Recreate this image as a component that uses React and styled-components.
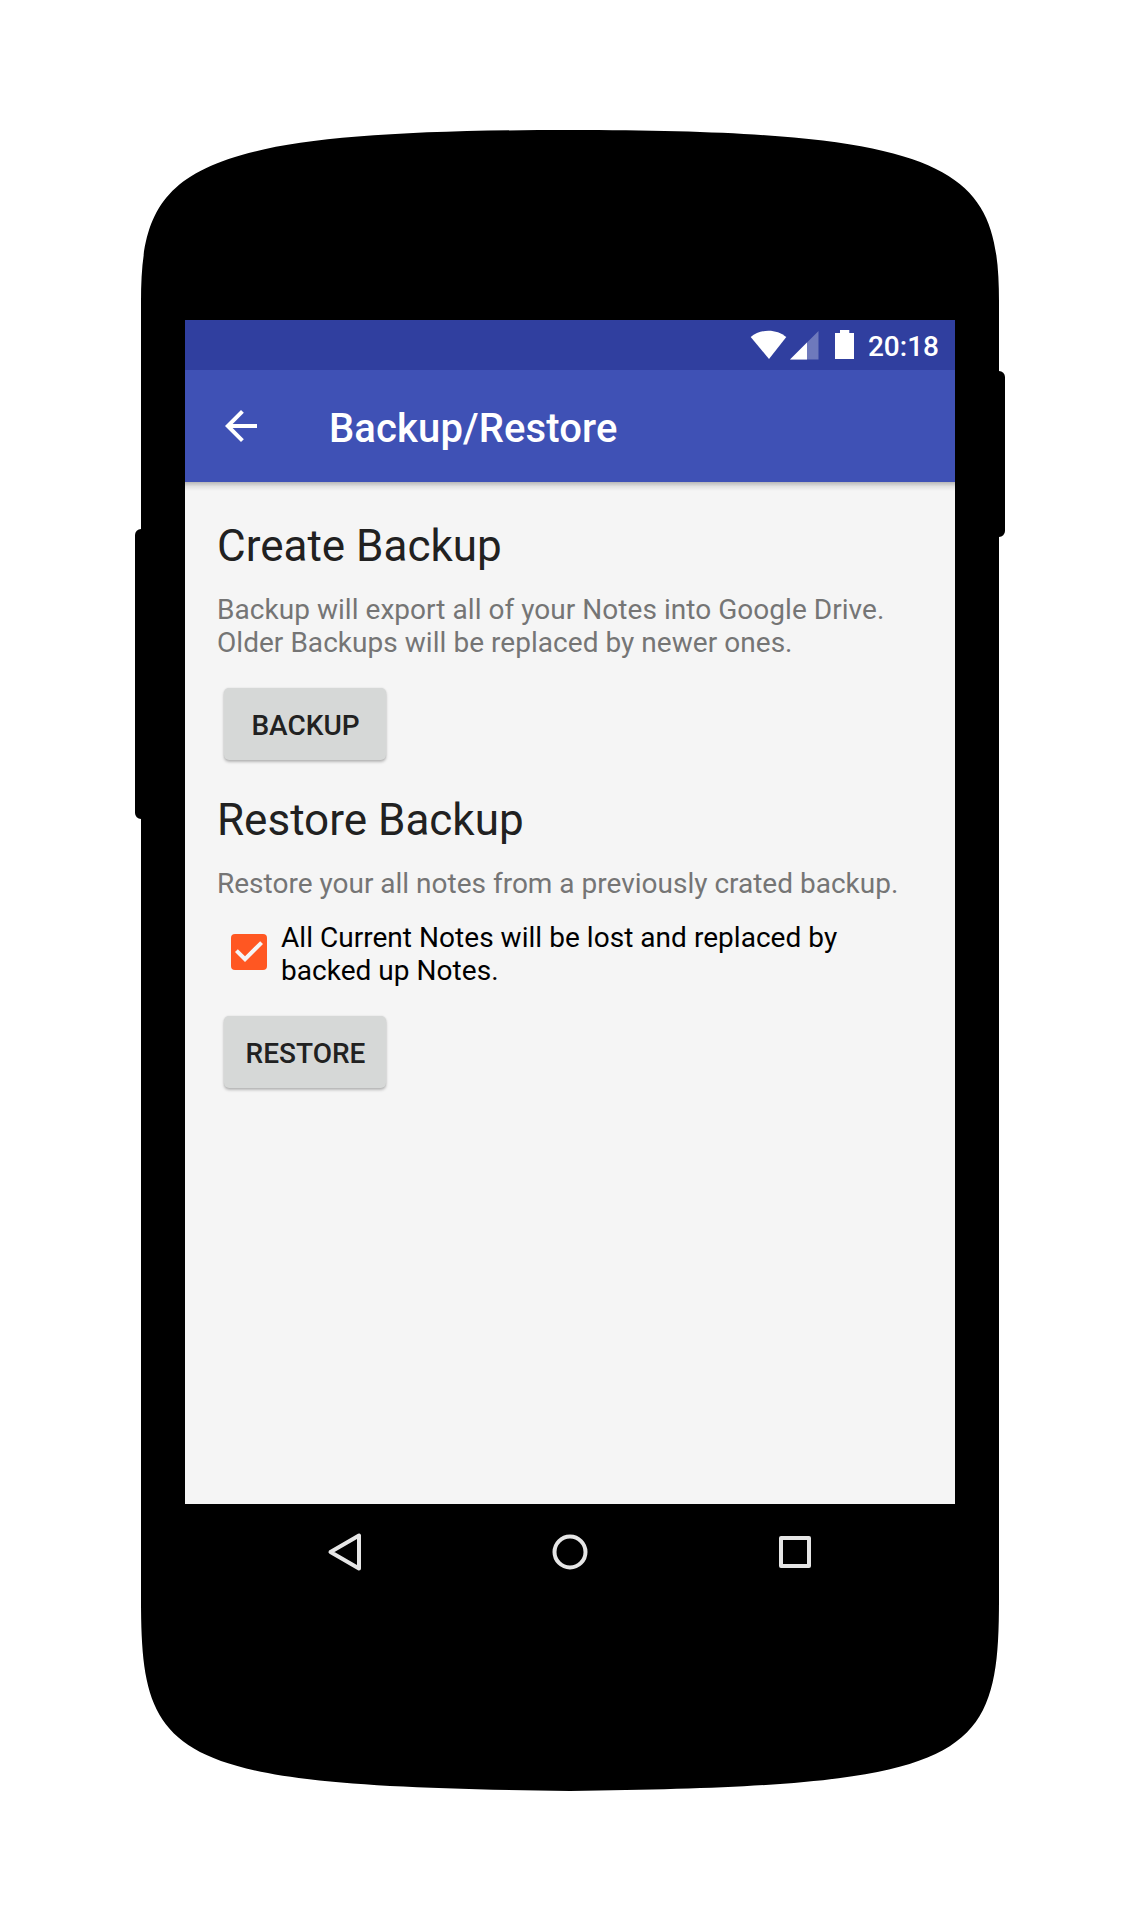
import React, { useState } from "react";
import styled, { createGlobalStyle } from "styled-components";

const GlobalStyle = createGlobalStyle`
  * { box-sizing: border-box; }
  body {
    margin: 0;
    background: #ffffff;
    font-family: Roboto, "Liberation Sans", sans-serif;
  }
`;

const Page = styled.main`
  display: flex;
  justify-content: center;
  width: 1140px;
  height: 1920px;
  padding-top: 130px;
`;

/* Phone silhouette: curved shell plus the side keys. */
const Device = styled.div`
  width: 870px;
  height: 1661px;
  padding: 190px 50px 0;
  background: #000000;
  clip-path: path(
    "M435 0 C825 0 864 40 864 172 L864 241 A6 6 0 0 1 870 247 L870 401 A6 6 0 0 1 864 407 L864 1470 C864 1632 836 1656 435 1661 C34 1656 6 1632 6 1470 L6 689 A6 6 0 0 1 0 683 L0 405 A6 6 0 0 1 6 399 L6 172 C6 40 45 0 435 0 Z"
  );
`;

const Screen = styled.div`
  display: flex;
  flex-direction: column;
  width: 770px;
  height: 1280px;
`;

const StatusBar = styled.div`
  display: flex;
  align-items: flex-start;
  justify-content: flex-end;
  height: 50px;
  padding: 10px 16px 0 0;
  background: #303f9f;
  color: #ffffff;
`;

const StatusIcons = styled.svg`
  flex: none;
  width: 106px;
  height: 32px;
  margin-right: 12px;
`;

const Clock = styled.time`
  font-size: 28px;
  font-weight: 500;
  line-height: 33px;
`;

const Toolbar = styled.header`
  display: flex;
  align-items: center;
  flex: none;
  height: 112px;
  padding-left: 32px;
  background: #3f51b5;
  color: #ffffff;
`;

const BackButton = styled.button`
  display: flex;
  width: 48px;
  height: 48px;
  margin-right: 64px;
  padding: 0;
  border: 0;
  background: none;
  color: inherit;

  svg {
    width: 48px;
    height: 48px;
  }
`;

const Title = styled.h1`
  margin: 6px 0 0;
  font-size: 40px;
  font-weight: 500;
  line-height: 48px;
  letter-spacing: 0.12px;
`;

const Content = styled.section`
  flex: 1;
  padding: 38px 32px 0;
  background: linear-gradient(rgba(0, 0, 0, 0.25), rgba(0, 0, 0, 0.08) 50%, rgba(0, 0, 0, 0)) 0 0 / 100% 9px no-repeat #f5f5f5;
`;

const Heading = styled.h2`
  margin: 0 0 21px;
  color: #212121;
  font-size: 44px;
  font-weight: 400;
  line-height: 52px;
`;

const Description = styled.p`
  margin: 0;
  color: #757575;
  font-size: 28px;
  line-height: 33px;
  letter-spacing: ${(p) => p.$tracking || "normal"};
  white-space: pre-line;
`;

const ActionButton = styled.button`
  display: flex;
  align-items: center;
  justify-content: center;
  width: 162px;
  height: 72px;
  margin: 29px 0 ${(p) => p.$gapAfter || 0}px 7px;
  padding: 3px 0 0 1px;
  border: 0;
  border-radius: 5px;
  background: #d6d8d7;
  box-shadow: 0 2px 3px rgba(0, 0, 0, 0.25), 0 0 2px rgba(0, 0, 0, 0.1);
  color: #212121;
  font-family: inherit;
  font-size: 28px;
  font-weight: 500;
  line-height: 33px;
  text-transform: uppercase;
`;

const CheckRow = styled.label`
  display: flex;
  align-items: center;
  margin-top: 21px;
`;

const CheckInput = styled.input`
  position: absolute;
  opacity: 0;
`;

const CheckMark = styled.svg`
  flex: none;
  width: 48px;
  height: 48px;
  margin: 0 8px 4px;
`;

const CheckText = styled.span`
  color: #000000;
  font-size: 28px;
  line-height: 33px;
  letter-spacing: 0.035px;
  white-space: pre-line;
`;

const NavBar = styled.nav`
  display: flex;
  align-items: center;
  justify-content: center;
  gap: 177px;
  flex: none;
  height: 96px;
`;

const NavIcon = styled.svg`
  width: 48px;
  height: 48px;
  fill: none;
  stroke: #e6e6e6;
  stroke-width: 4;
  stroke-linejoin: round;
`;

export default function App() {
  const [confirmed, setConfirmed] = useState(true);

  return (
    <>
      <GlobalStyle />
      <Page>
        <Device>
          <Screen>
            <StatusBar>
              <StatusIcons viewBox="0 0 106 32" fill="#ffffff">
                <path d="M0.7 7.1 C10.5-1.4 26.5-1.4 36.3 7.1 L19 29 Z" />
                <path d="M40 29.5 L68.5 1 V29.5 Z" opacity="0.3" />
                <path d="M40 29.5 L57 12.5 V29.5 Z" />
                <path d="M90 0 h9.3 v3 H104 v26 H85 V3 h5 Z" />
              </StatusIcons>
              <Clock>20:18</Clock>
            </StatusBar>
            <Toolbar>
              <BackButton aria-label="Back">
                <svg viewBox="0 0 24 24" fill="currentColor">
                  <path d="M20 11H7.83l5.59-5.59L12 4l-8 8 8 8 1.41-1.41L7.83 13H20v-2z" />
                </svg>
              </BackButton>
              <Title>Backup/Restore</Title>
            </Toolbar>
            <Content>
              <Heading>Create Backup</Heading>
              <Description $tracking="0.04px">
                {"Backup will export all of your Notes into Google Drive.\nOlder Backups will be replaced by newer ones."}
              </Description>
              <ActionButton $gapAfter={34}>Backup</ActionButton>
              <Heading>Restore Backup</Heading>
              <Description>Restore your all notes from a previously crated backup.</Description>
              <CheckRow>
                <CheckInput type="checkbox" checked={confirmed} onChange={() => setConfirmed(!confirmed)} />
                <CheckMark viewBox="0 0 24 24">
                  <rect x="3" y="3" width="18" height="18" rx="2" fill={confirmed ? "#ff5722" : "#757575"} />
                  {confirmed && (
                    <path d="M10 17l-5-5 1.41-1.41L10 14.17l7.59-7.59L19 8z" fill="#f5f5f5" />
                  )}
                </CheckMark>
                <CheckText>{"All Current Notes will be lost and replaced by\nbacked up Notes."}</CheckText>
              </CheckRow>
              <ActionButton>Restore</ActionButton>
            </Content>
            <NavBar>
              <NavIcon viewBox="0 0 48 48">
                <path d="M9.5 24 L38 7.5 V40.5 Z" />
              </NavIcon>
              <NavIcon viewBox="0 0 48 48">
                <circle cx="24" cy="24" r="15.5" />
              </NavIcon>
              <NavIcon viewBox="0 0 48 48">
                <rect x="10" y="10" width="28" height="28" />
              </NavIcon>
            </NavBar>
          </Screen>
        </Device>
      </Page>
    </>
  );
}
